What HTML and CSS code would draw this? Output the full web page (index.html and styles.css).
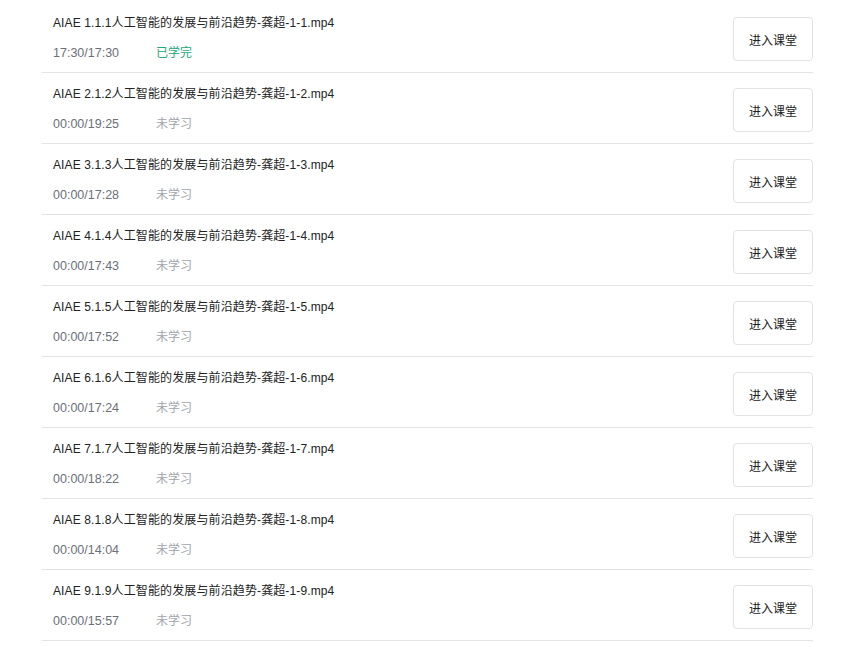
FILE: index.html
```html
<!DOCTYPE html>
<html lang="zh">
<head>
<meta charset="utf-8">
<link rel="stylesheet" href="styles.css">
</head>
<body>
<ul class="list">
  <li class="row"><div class="info"><div class="title">AIAE 1.1.1人工智能的发展与前沿趋势-龚超-1-1.mp4</div><div class="meta"><span class="time">17:30/17:30</span><span class="status done">已学完</span></div></div><button class="enter">进入课堂</button></li>
  <li class="row"><div class="info"><div class="title">AIAE 2.1.2人工智能的发展与前沿趋势-龚超-1-2.mp4</div><div class="meta"><span class="time">00:00/19:25</span><span class="status">未学习</span></div></div><button class="enter">进入课堂</button></li>
  <li class="row"><div class="info"><div class="title">AIAE 3.1.3人工智能的发展与前沿趋势-龚超-1-3.mp4</div><div class="meta"><span class="time">00:00/17:28</span><span class="status">未学习</span></div></div><button class="enter">进入课堂</button></li>
  <li class="row"><div class="info"><div class="title">AIAE 4.1.4人工智能的发展与前沿趋势-龚超-1-4.mp4</div><div class="meta"><span class="time">00:00/17:43</span><span class="status">未学习</span></div></div><button class="enter">进入课堂</button></li>
  <li class="row"><div class="info"><div class="title">AIAE 5.1.5人工智能的发展与前沿趋势-龚超-1-5.mp4</div><div class="meta"><span class="time">00:00/17:52</span><span class="status">未学习</span></div></div><button class="enter">进入课堂</button></li>
  <li class="row"><div class="info"><div class="title">AIAE 6.1.6人工智能的发展与前沿趋势-龚超-1-6.mp4</div><div class="meta"><span class="time">00:00/17:24</span><span class="status">未学习</span></div></div><button class="enter">进入课堂</button></li>
  <li class="row"><div class="info"><div class="title">AIAE 7.1.7人工智能的发展与前沿趋势-龚超-1-7.mp4</div><div class="meta"><span class="time">00:00/18:22</span><span class="status">未学习</span></div></div><button class="enter">进入课堂</button></li>
  <li class="row"><div class="info"><div class="title">AIAE 8.1.8人工智能的发展与前沿趋势-龚超-1-8.mp4</div><div class="meta"><span class="time">00:00/14:04</span><span class="status">未学习</span></div></div><button class="enter">进入课堂</button></li>
  <li class="row"><div class="info"><div class="title">AIAE 9.1.9人工智能的发展与前沿趋势-龚超-1-9.mp4</div><div class="meta"><span class="time">00:00/15:57</span><span class="status">未学习</span></div></div><button class="enter">进入课堂</button></li>
</ul>
</body>
</html>
```
FILE: styles.css
```css
html, body {
  margin: 0;
  padding: 0;
  background: #fff;
}
body {
  font-family: "Liberation Sans", "Noto Sans CJK SC", sans-serif;
  font-size: 12px;
}
.list {
  list-style: none;
  margin: 2px 0 0 42px;
  padding: 0;
  width: 771px;
}
.row {
  display: flex;
  justify-content: space-between;
  align-items: flex-start;
  height: 70px;
  border-bottom: 1px solid #e4e4e4;
}
.info {
  padding: 13px 0 0 11px;
}
.title {
  line-height: 16px;
  color: #222;
  letter-spacing: 0.12px;
}
.meta {
  margin-top: 14px;
  line-height: 16px;
  display: flex;
}
.time {
  width: 103px;
  color: #6b6f78;
  font-size: 12.5px;
}
.status {
  color: #a0a4ab;
}
.status.done {
  color: #21a87a;
}
.enter {
  margin-top: 15px;
  width: 80px;
  height: 44px;
  border: 1px solid #e2e2e2;
  border-radius: 4px;
  background: #fff;
  font-family: "Liberation Sans", "Noto Sans CJK SC", sans-serif;
  font-size: 12px;
  color: #222;
  padding: 0;
}
```
